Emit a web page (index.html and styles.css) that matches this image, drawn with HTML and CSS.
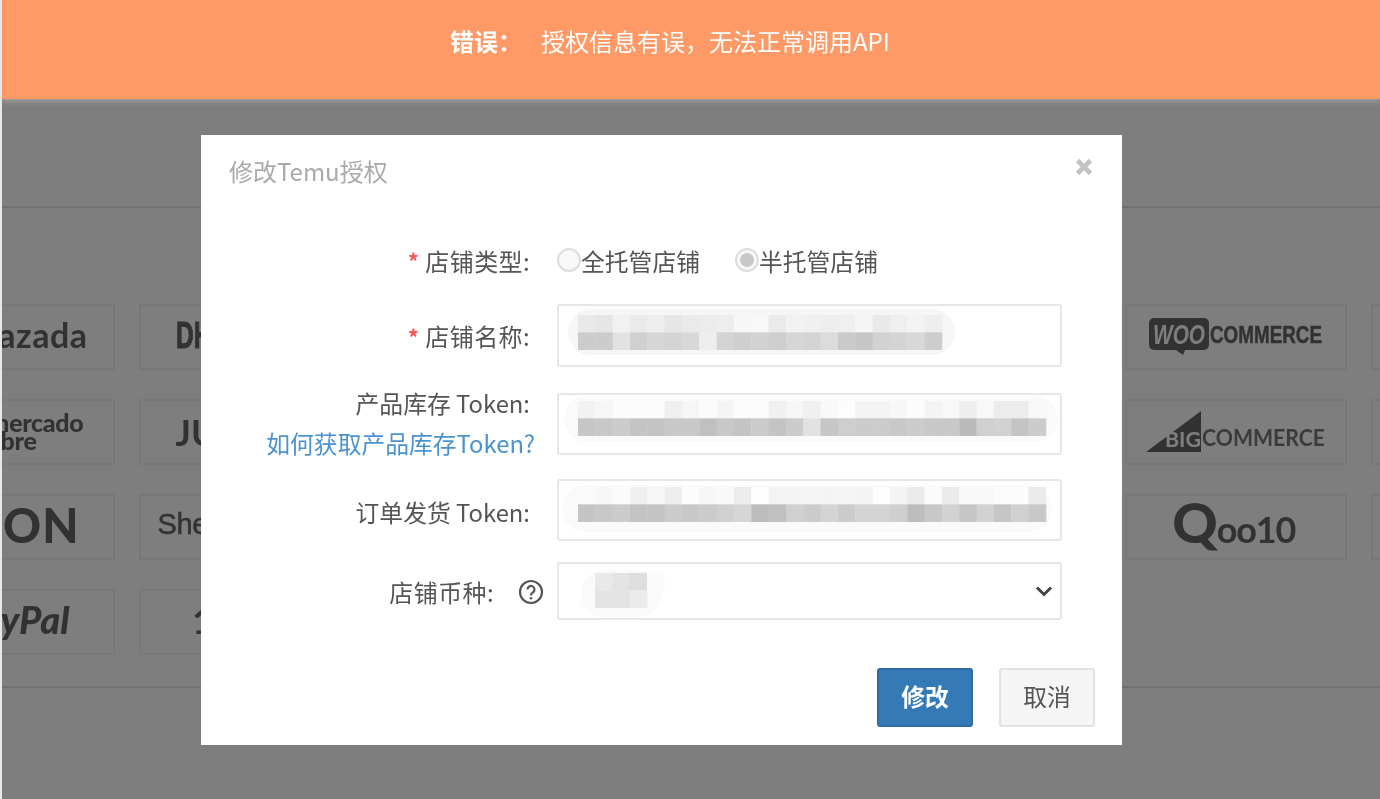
FILE: index.html
```html
<!DOCTYPE html>
<html lang="zh-CN">
<head>
<meta charset="utf-8">
<title>修改Temu授权</title>
<link rel="stylesheet" href="styles.css">
</head>
<body>
<div class="screen">
  <header class="banner"><strong class="banner-title">错误：</strong><span>授权信息有误，无法正常调用API</span></header>

  <main class="platforms">
    <div class="logo-grid">
      <div class="card end lazada">Lazada</div>
      <div class="card dh"><span class="dh-text">DHgate</span></div>
      <div class="card"></div><div class="card"></div><div class="card"></div>
      <div class="card woo">
        <svg class="woo-logo" width="176" height="42" viewBox="0 0 176 42">
          <path class="dark" d="M5 2h50a5 5 0 0 1 5 5v22a5 5 0 0 1-5 5H36l-2 5-7-5H5a5 5 0 0 1-5-5V7a5 5 0 0 1 5-5z"/>
          <text class="woo-mark" x="4" y="28" textLength="52" lengthAdjust="spacingAndGlyphs">WOO</text>
          <text class="woo-word" x="61" y="27" textLength="112" lengthAdjust="spacingAndGlyphs">COMMERCE</text>
        </svg>
      </div>
      <div class="card"></div>

      <div class="card end mercado"><span class="mercado-text">mercado<br>libre</span></div>
      <div class="card ju">JUMIA</div>
      <div class="card"></div><div class="card"></div><div class="card"></div>
      <div class="card big">
        <svg class="big-logo" width="182" height="44" viewBox="0 0 182 44">
          <path class="dark" d="M1 42 56 1v41z"/>
          <text class="big-mark" x="20" y="37" textLength="36" lengthAdjust="spacingAndGlyphs">BIG</text>
          <text class="big-word" x="57" y="36" textLength="123" lengthAdjust="spacingAndGlyphs">COMMERCE</text>
        </svg>
      </div>
      <div class="card"></div>

      <div class="card end aeon">AEON</div>
      <div class="card shein">Shein</div>
      <div class="card"></div><div class="card"></div><div class="card"></div>
      <div class="card qoo"><span class="qoo-q">Q</span><span class="qoo-rest">oo10</span></div>
      <div class="card"></div>

      <div class="card end paypal">PayPal</div>
      <div class="card n1688">1688</div>
      <div class="card"></div><div class="card"></div><div class="card"></div>
    </div>
  </main>

  <div class="overlay"></div>

  <section class="modal">
    <h2 class="modal-title">修改Temu授权</h2>
    <button class="close" type="button" aria-label="关闭">
      <svg width="18" height="18" viewBox="0 0 18 18"><path d="M2.5 2.5l13 13M15.500 2.500l-13 13"/></svg>
    </button>

    <form class="form">
      <div class="row row-type">
        <div class="label pad wide"><span class="req">*</span>店铺类型:</div>
        <div class="radios">
          <label class="radio"><i class="dot"></i>全托管店铺</label>
          <label class="radio"><i class="dot on"></i>半托管店铺</label>
        </div>
      </div>

      <div class="row row-name">
        <div class="label pad wide"><span class="req">*</span>店铺名称:</div>
        <div class="field">
          <svg class="mosaic" width="501" height="59">
            <rect class="halo" x="9" y="3" width="387" height="46" rx="23"/>
            <g transform="translate(19 9) scale(17.33)">
              <rect x="0" fill="#e9e9e9"/><rect x="1" fill="#e6e6e6"/><rect x="2" fill="#f1f1f1"/><rect x="3" fill="#eaeaea"/><rect x="4" fill="#eeeeee"/><rect x="5" fill="#e6e6e6"/><rect x="6" fill="#eaeaea"/><rect x="7" fill="#ececec"/><rect x="8" fill="#eeeeee"/><rect x="9" fill="#f7f7f7"/><rect x="10" fill="#f8f8f8"/><rect x="11" fill="#eaeaea"/><rect x="12" fill="#f2f2f2"/><rect x="13" fill="#f0f0f0"/><rect x="14" fill="#eeeeee"/><rect x="15" fill="#efefef"/><rect x="16" fill="#f5f5f5"/><rect x="17" fill="#e9e9e9"/><rect x="18" fill="#efefef"/><rect x="19" fill="#f3f3f3"/><rect x="20" fill="#eeeeee"/>
              <rect x="0" y="1" fill="#cccccc"/><rect x="1" y="1" fill="#cccccc"/><rect x="2" y="1" fill="#e2e2e2"/><rect x="3" y="1" fill="#d0d0d0"/><rect x="4" y="1" fill="#d6d6d6"/><rect x="5" y="1" fill="#d4d4d4"/><rect x="6" y="1" fill="#d8d8d8"/><rect x="7" y="1" fill="#eeeeee"/><rect x="8" y="1" fill="#d4d4d4"/><rect x="9" y="1" fill="#cfcfcf"/><rect x="10" y="1" fill="#d2d2d2"/><rect x="11" y="1" fill="#cecece"/><rect x="12" y="1" fill="#d6d6d6"/><rect x="13" y="1" fill="#d4d4d4"/><rect x="14" y="1" fill="#dcdcdc"/><rect x="15" y="1" fill="#cacaca"/><rect x="16" y="1" fill="#c6c6c6"/><rect x="17" y="1" fill="#d2d2d2"/><rect x="18" y="1" fill="#d4d4d4"/><rect x="19" y="1" fill="#d8d8d8"/><rect x="20" y="1" fill="#cdcdcd"/>
            </g>
          </svg>
        </div>
      </div>

      <div class="row row-stock">
        <div class="label stack pad">
          <span>产品库存 Token:</span>
          <a class="help-link" href="#">如何获取产品库存Token?</a>
        </div>
        <div class="field">
          <svg class="mosaic" width="501" height="58">
            <rect class="halo light" x="5" y="1" width="494" height="46" rx="23"/>
            <g transform="translate(19 6) scale(17.33)">
              <rect x="0" fill="#f2f2f2"/><rect x="1" fill="#f6f6f6"/><rect x="2" fill="#fcfcfc"/><rect x="3" fill="#fcfcfc"/><rect x="4" fill="#fcfcfc"/><rect x="5" fill="#efefef"/><rect x="6" fill="#f6f6f6"/><rect x="7" fill="#fbfbfb"/><rect x="8" fill="#f5f5f5"/><rect x="9" fill="#fcfcfc"/><rect x="10" fill="#fcfcfc"/><rect x="11" fill="#f0f0f0"/><rect x="12" fill="#f6f6f6"/><rect x="13" fill="#f0f0f0"/><rect x="14" fill="#f9f9f9"/><rect x="15" fill="#fdfdfd"/><rect x="16" fill="#f4f4f4"/><rect x="17" fill="#f4f4f4"/><rect x="18" fill="#f7f7f7"/><rect x="19" fill="#fcfcfc"/><rect x="20" fill="#f4f4f4"/><rect x="21" fill="#f8f8f8"/><rect x="22" fill="#eeeeee"/><rect x="23" fill="#f8f8f8"/><rect x="24" fill="#ececec"/><rect x="25" fill="#ececec"/><rect x="26" fill="#f8f8f8"/>
              <rect x="0" y="1" fill="#c6c6c6"/><rect x="1" y="1" fill="#c8c8c8"/><rect x="2" y="1" fill="#cccccc"/><rect x="3" y="1" fill="#c4c4c4"/><rect x="4" y="1" fill="#c4c4c4"/><rect x="5" y="1" fill="#c8c8c8"/><rect x="6" y="1" fill="#c8c8c8"/><rect x="7" y="1" fill="#c0c0c0"/><rect x="8" y="1" fill="#c8c8c8"/><rect x="9" y="1" fill="#c4c4c4"/><rect x="10" y="1" fill="#cccccc"/><rect x="11" y="1" fill="#c4c4c4"/><rect x="12" y="1" fill="#cccccc"/><rect x="13" y="1" fill="#e2e2e2"/><rect x="14" y="1" fill="#c6c6c6"/><rect x="15" y="1" fill="#cecece"/><rect x="16" y="1" fill="#cccccc"/><rect x="17" y="1" fill="#cccccc"/><rect x="18" y="1" fill="#c8c8c8"/><rect x="19" y="1" fill="#cccccc"/><rect x="20" y="1" fill="#c8c8c8"/><rect x="21" y="1" fill="#c8c8c8"/><rect x="22" y="1" fill="#bababa"/><rect x="23" y="1" fill="#d0d0d0"/><rect x="24" y="1" fill="#d2d2d2"/><rect x="25" y="1" fill="#c4c4c4"/><rect x="26" y="1" fill="#cccccc"/>
            </g>
          </svg>
        </div>
      </div>

      <div class="row row-order">
        <div class="label pad order-label">订单发货 Token:</div>
        <div class="field">
          <svg class="mosaic" width="501" height="58">
            <rect class="halo light" x="3" y="4" width="490" height="47" rx="23"/>
            <g transform="translate(19 6) scale(17.33)">
              <rect x="0" fill="#fafafa"/><rect x="1" fill="#f7f7f7"/><rect x="2" fill="#fbfbfb"/><rect x="3" fill="#efefef"/><rect x="4" fill="#f7f7f7"/><rect x="5" fill="#eeeeee"/><rect x="6" fill="#fcfcfc"/><rect x="7" fill="#f7f7f7"/><rect x="8" fill="#f9f9f9"/><rect x="9" fill="#ececec"/><rect x="10" fill="#fdfdfd"/><rect x="11" fill="#f3f3f3"/><rect x="12" fill="#f4f4f4"/><rect x="13" fill="#f5f5f5"/><rect x="14" fill="#f4f4f4"/><rect x="15" fill="#f5f5f5"/><rect x="16" fill="#f3f3f3"/><rect x="17" fill="#fdfdfd"/><rect x="18" fill="#f4f4f4"/><rect x="19" fill="#ebebeb"/><rect x="20" fill="#fbfbfb"/><rect x="21" fill="#ebebeb"/><rect x="22" fill="#f8f8f8"/><rect x="23" fill="#f8f8f8"/><rect x="24" fill="#fcfcfc"/><rect x="25" fill="#fcfcfc"/><rect x="26" fill="#ebebeb"/>
              <rect x="0" y="1" fill="#c4c4c4"/><rect x="1" y="1" fill="#c8c8c8"/><rect x="2" y="1" fill="#cccccc"/><rect x="3" y="1" fill="#c4c4c4"/><rect x="4" y="1" fill="#c4c4c4"/><rect x="5" y="1" fill="#cccccc"/><rect x="6" y="1" fill="#c8c8c8"/><rect x="7" y="1" fill="#cccccc"/><rect x="8" y="1" fill="#d0d0d0"/><rect x="9" y="1" fill="#d6d6d6"/><rect x="10" y="1" fill="#bdbdbd"/><rect x="11" y="1" fill="#c0c0c0"/><rect x="12" y="1" fill="#d0d0d0"/><rect x="13" y="1" fill="#cccccc"/><rect x="14" y="1" fill="#d4d4d4"/><rect x="15" y="1" fill="#cccccc"/><rect x="16" y="1" fill="#d4d4d4"/><rect x="17" y="1" fill="#d4d4d4"/><rect x="18" y="1" fill="#cfcfcf"/><rect x="19" y="1" fill="#bdbdbd"/><rect x="20" y="1" fill="#c8c8c8"/><rect x="21" y="1" fill="#d2d2d2"/><rect x="22" y="1" fill="#c6c6c6"/><rect x="23" y="1" fill="#d2d2d2"/><rect x="24" y="1" fill="#c6c6c6"/><rect x="25" y="1" fill="#d0d0d0"/><rect x="26" y="1" fill="#c8c8c8"/>
            </g>
          </svg>
        </div>
      </div>

      <div class="row row-currency">
        <div class="label currency-label wide"><span class="currency-text">店铺币种:</span>
          <svg class="help" width="26" height="26" viewBox="0 0 26 26">
            <circle cx="13" cy="13" r="11"/>
            <path d="M9.500 10.500a3.500 3.500 0 1 1 5.400 2.900c-1.300.9-1.900 1.500-1.900 3"/>
            <circle class="help-dot" cx="13" cy="19.300" r="1.300"/>
          </svg>
        </div>
        <div class="field select">
          <svg class="mosaic" width="501" height="54">
            <rect class="halo light" x="22" y="6" width="80" height="47" rx="23"/>
            <g transform="translate(36 9) scale(17.33)">
              <rect x="0" fill="#e9e9e9"/><rect x="1" fill="#e3e3e3"/><rect x="2" fill="#dedede"/><rect x="3" fill="#fbfbfb"/>
              <rect x="0" y="1" fill="#e3e3e3"/><rect x="1" y="1" fill="#e3e3e3"/><rect x="2" y="1" fill="#ebebeb"/>
            </g>
          </svg>
          <svg class="chevron" width="18" height="12" viewBox="0 0 18 12"><path d="M2 2.500l7 7 7-7"/></svg>
        </div>
      </div>
    </form>

    <footer class="modal-footer">
      <button class="btn primary" type="button">修改</button>
      <button class="btn" type="button">取消</button>
    </footer>
  </section>
</div>
</body>
</html>
```
FILE: styles.css
```css
* { box-sizing: border-box; }

html, body {
  margin: 0;
  height: 799px;
  overflow: hidden;
  background: #e8e8e8;
}

body {
  padding-left: 2px;
  font-family: "Noto Sans CJK SC", "Noto Sans", sans-serif;
}

.screen {
  position: relative;
  height: 799px;
  overflow: hidden;
  background: #fff;
  filter: blur(0.75px);
}

/* banner */
.banner {
  position: relative;
  z-index: 2;
  display: flex;
  height: 99px;
  padding-left: 448px;
  background: #ff9966;
  color: #fff;
  font-size: 24px;
  line-height: 82px;
  box-shadow: 0 2px 6px rgba(255, 255, 255, 0.32);
}

.banner-title {
  margin-right: 19px;
  font-weight: 700;
}

/* page behind the dialog */
.platforms {
  padding-top: 107px;
}

.logo-grid {
  display: grid;
  grid-template-columns: repeat(7, 222.5px);
  gap: 29px 24px;
  margin: 0 -400px 0 -110px;
  padding: 96px 0 31px;
  border-top: 2px solid #e4e4e4;
  border-bottom: 2px solid #e4e4e4;
}

.card {
  display: flex;
  align-items: center;
  height: 66px;
  overflow: hidden;
  border: 2px solid #f3f3f3;
  color: #666;
  font-family: Lato, "Noto Sans", sans-serif;
  font-weight: 700;
  white-space: nowrap;
}

.card.end { justify-content: flex-end; }

.lazada { padding: 0 25px 6px 0; font-size: 34px; letter-spacing: 0.5px; }
.mercado { padding: 0 29px 3px 0; font-size: 25px; line-height: 18px; font-weight: 900; letter-spacing: -0.3px; }
.mercado-text { display: block; flex: none; }
.aeon { padding: 0 33px 4px 0; font-size: 47px; font-weight: 900; letter-spacing: 1px; }
.paypal { padding: 0 43px 6px 0; font-size: 38px; font-style: italic; font-weight: 900; }
.dh { padding: 0 0 2px 35px; font-family: "Liberation Sans", sans-serif; font-size: 36px; font-weight: 700; }
.dh-text { transform: scaleX(0.68); transform-origin: left center; -webkit-text-stroke: 1px #666; }
.ju { padding-left: 35px; font-size: 36px; }
.shein { padding: 0 0 5px 17px; font-family: "Liberation Sans", sans-serif; font-weight: 400; font-size: 29px; letter-spacing: -0.3px; -webkit-text-stroke: 0.5px #666; }
.n1688 { padding: 0 0 4px 52px; font-size: 34px; font-weight: 900; }

.woo { justify-content: center; padding-left: 3px; }
.big { justify-content: center; }
.dark { fill: #666; }

.woo-mark {
  fill: #fff;
  font: italic 700 27px "Liberation Sans", sans-serif;
}
.woo-word {
  fill: #666;
  font: 700 24px "Liberation Sans", sans-serif;
  stroke: #666;
  stroke-width: 0.5;
}
.big-mark {
  fill: #fff;
  font: 700 20px Lato, sans-serif;
}
.big-word {
  fill: #777;
  font: 700 22px Lato, sans-serif;
}

.qoo {
  justify-content: center;
  align-items: baseline;
  padding-right: 4px;
  line-height: 52px;
}
.qoo-q { font-size: 56px; font-weight: 900; line-height: 52px; }
.qoo-rest { font-size: 36px; font-weight: 700; line-height: 52px; letter-spacing: -1.2px; margin-left: -1px; }

.overlay {
  position: absolute;
  inset: 0;
  z-index: 1;
  background: rgba(0, 0, 0, 0.505);
}

/* dialog */
.modal {
  position: absolute;
  z-index: 3;
  top: 135px;
  left: 199px;
  display: flex;
  flex-direction: column;
  width: 921px;
  height: 610px;
  padding-top: 24px;
  background: #fff;
  color: #555;
  font-size: 23.8px;
}

.modal-title {
  margin: 0 0 0 28px;
  color: #aaa;
  font-size: 24px;
  font-weight: 400;
  line-height: 24px;
}

.close {
  position: absolute;
  top: 23px;
  right: 29px;
  display: flex;
  padding: 0;
  border: 0;
  background: none;
}

.close path {
  fill: none;
  stroke: #c4c4c4;
  stroke-width: 4.8;
}

.form {
  display: flex;
  flex-direction: column;
  margin-top: 65px;
}

.row {
  display: grid;
  grid-template-columns: 344px 505px;
  column-gap: 12px;
  align-items: center;
}

.row-type { height: 25px; }
.row-name { height: 63px; margin-top: 31px; }
.row-stock { height: 62px; margin-top: 26px; }
.row-order { height: 62px; margin-top: 24px; }
.row-currency { height: 58px; margin-top: 21px; }

.label {
  display: flex;
  justify-content: flex-end;
  align-items: center;
  line-height: 40px;
  white-space: nowrap;
}

.pad { padding-right: 15px; }
.wide { font-size: 24px; letter-spacing: 0.4px; }
.order-label { padding-top: 3px; }

.row-type .label { line-height: 25px; padding-bottom: 1px; }

.stack {
  flex-direction: column;
  align-items: flex-end;
  height: 80px;
  margin: -10px 0 -8px;
}

.req {
  margin-right: 6px;
  color: #f55;
  font-size: 22px;
  font-weight: 700;
}

.help-link {
  margin-right: -5px;
  color: #4b93cf;
  text-decoration: none;
}

.currency-label { padding-top: 2px; }
.currency-text { margin-right: 4px; }

.help {
  flex: none;
  margin: 0 1px 0 20px;
}

.help circle {
  fill: none;
  stroke: #555;
  stroke-width: 2.2;
}

.help path {
  fill: none;
  stroke: #555;
  stroke-width: 2.2;
}

.help .help-dot {
  fill: #555;
  stroke: none;
}

.radios {
  display: flex;
  gap: 35px;
  margin-top: -2px;
  line-height: 25px;
}

.radio {
  display: flex;
  align-items: center;
  gap: 0;
}

.dot {
  display: flex;
  justify-content: center;
  align-items: center;
  width: 24px;
  height: 24px;
  border: 2px solid #ddd;
  border-radius: 50%;
  background: #f8f8f8;
}

.dot.on::after {
  content: "";
  width: 14px;
  height: 14px;
  border-radius: 50%;
  background: #c8c8c8;
}

.field {
  position: relative;
  height: 100%;
  border: 2px solid #e6e6e6;
  border-radius: 3px;
  background: #fff;
}

.mosaic {
  position: absolute;
  top: 0;
  left: 0;
}

.mosaic g rect {
  width: 1.02px;
  height: 1.02px;
}

.mosaic .halo {
  fill: #f6f6f6;
}

.mosaic .halo.light {
  fill: #fafafa;
}

.select {
  display: flex;
  justify-content: flex-end;
  align-items: center;
  padding-right: 7px;
}

.chevron path {
  fill: none;
  stroke: #444;
  stroke-width: 3;
}

.chevron { position: relative; }

.modal-footer {
  display: flex;
  justify-content: flex-end;
  gap: 26px;
  margin-top: 48px;
  padding-right: 27px;
}

.btn {
  width: 96px;
  height: 59px;
  padding: 0 0 4px;
  border: 2px solid #e2e2e2;
  border-radius: 3px;
  background: #f5f5f5;
  color: #555;
  font: 400 23.8px "Noto Sans CJK SC", sans-serif;
}

.btn.primary {
  border-color: #2e6da4;
  background: #337ab7;
  color: #fff;
  font-weight: 700;
}
```
